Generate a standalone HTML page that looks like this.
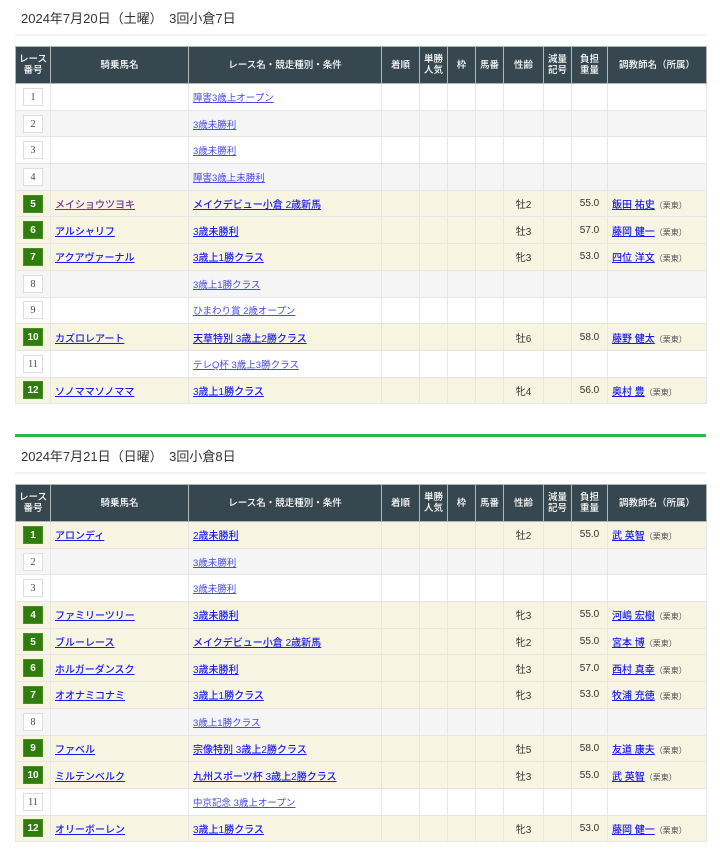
<!DOCTYPE html>
<html><head><meta charset="utf-8"><style>
body{margin:0;background:#fff;font-family:"Liberation Sans","Noto Sans CJK JP",sans-serif;color:#333;width:720px;}
.t{position:absolute;left:21px;font-size:13px;color:#333;}
.hl{position:absolute;left:15px;width:691px;height:2px;background:#f1f1f1;}
.g{position:absolute;left:15px;width:691px;height:3px;background:#2db64a;}
table{position:absolute;left:15px;width:691px;border-collapse:collapse;table-layout:fixed;font-size:10px;}
th{background:#37474f;color:#fff;font-weight:500;font-size:9.5px;line-height:11px;border:1px solid #aeb6ba;height:36px;padding:0;}
td{border:1px solid #e6e6e6;padding:0;height:25.7px;text-align:center;}
td.l{text-align:left;padding-left:4px;}
tr.a td{background:#f8f4e2;}
tr.w td{background:#fff;}
tr.s td{background:#f5f5f5;}
.n{display:inline-block;width:20px;height:18px;line-height:18px;font-size:10px;border:1px solid #ddd;background:#fff;color:#444;box-sizing:border-box;font-family:"Liberation Serif",serif;}
tr.a .n{background:#2f7d0b;border-color:#4c8c2a;color:#fff;font-weight:bold;font-family:"Liberation Sans",sans-serif;}
a{color:#1a1aee;text-decoration:underline;}
tr.a a{font-weight:500;font-size:10px;}
tr.w a,tr.s a{color:#4a4ae8;font-size:9.5px;}
.sf{font-size:8px;color:#555;}
</style></head><body>
<div class="t" style="top:8px">2024年7月20日（土曜）　3回小倉7日</div>
<div class="hl" style="top:34px"></div>
<table style="top:46px">
<colgroup><col style="width:35px"><col style="width:138px"><col style="width:193px"><col style="width:38px"><col style="width:28px"><col style="width:28px"><col style="width:28px"><col style="width:40px"><col style="width:28px"><col style="width:36px"><col style="width:99px"></colgroup>
<tr><th>レース<br>番号</th><th>騎乗馬名</th><th>レース名・競走種別・条件</th><th>着順</th><th>単勝<br>人気</th><th>枠</th><th>馬番</th><th>性齢</th><th>減量<br>記号</th><th>負担<br>重量</th><th>調教師名（所属）</th></tr>
<tr class="w"><td><span class="n">1</span></td><td></td><td class="l"><a>障害3歳上オープン</a></td><td></td><td></td><td></td><td></td><td></td><td></td><td></td><td></td></tr>
<tr class="s"><td><span class="n">2</span></td><td></td><td class="l"><a>3歳未勝利</a></td><td></td><td></td><td></td><td></td><td></td><td></td><td></td><td></td></tr>
<tr class="w"><td><span class="n">3</span></td><td></td><td class="l"><a>3歳未勝利</a></td><td></td><td></td><td></td><td></td><td></td><td></td><td></td><td></td></tr>
<tr class="s"><td><span class="n">4</span></td><td></td><td class="l"><a>障害3歳上未勝利</a></td><td></td><td></td><td></td><td></td><td></td><td></td><td></td><td></td></tr>
<tr class="a"><td><span class="n">5</span></td><td class="l"><a style="color:#6a3a9a">メイショウツヨキ</a></td><td class="l"><a>メイクデビュー小倉 2歳新馬</a></td><td></td><td></td><td></td><td></td><td>牡2</td><td></td><td>55.0</td><td class="l"><a>飯田 祐史</a><span class="sf">（栗東）</span></td></tr>
<tr class="a"><td><span class="n">6</span></td><td class="l"><a>アルシャリフ</a></td><td class="l"><a>3歳未勝利</a></td><td></td><td></td><td></td><td></td><td>牡3</td><td></td><td>57.0</td><td class="l"><a>藤岡 健一</a><span class="sf">（栗東）</span></td></tr>
<tr class="a"><td><span class="n">7</span></td><td class="l"><a>アクアヴァーナル</a></td><td class="l"><a>3歳上1勝クラス</a></td><td></td><td></td><td></td><td></td><td>牝3</td><td></td><td>53.0</td><td class="l"><a>四位 洋文</a><span class="sf">（栗東）</span></td></tr>
<tr class="s"><td><span class="n">8</span></td><td></td><td class="l"><a>3歳上1勝クラス</a></td><td></td><td></td><td></td><td></td><td></td><td></td><td></td><td></td></tr>
<tr class="w"><td><span class="n">9</span></td><td></td><td class="l"><a>ひまわり賞 2歳オープン</a></td><td></td><td></td><td></td><td></td><td></td><td></td><td></td><td></td></tr>
<tr class="a"><td><span class="n">10</span></td><td class="l"><a>カズロレアート</a></td><td class="l"><a>天草特別 3歳上2勝クラス</a></td><td></td><td></td><td></td><td></td><td>牡6</td><td></td><td>58.0</td><td class="l"><a>藤野 健太</a><span class="sf">（栗東）</span></td></tr>
<tr class="w"><td><span class="n">11</span></td><td></td><td class="l"><a>テレQ杯 3歳上3勝クラス</a></td><td></td><td></td><td></td><td></td><td></td><td></td><td></td><td></td></tr>
<tr class="a"><td><span class="n">12</span></td><td class="l"><a>ソノママソノママ</a></td><td class="l"><a>3歳上1勝クラス</a></td><td></td><td></td><td></td><td></td><td>牝4</td><td></td><td>56.0</td><td class="l"><a>奥村 豊</a><span class="sf">（栗東）</span></td></tr>
</table>
<div class="g" style="top:434px"></div>
<div class="t" style="top:446px">2024年7月21日（日曜）　3回小倉8日</div>
<div class="hl" style="top:472px"></div>
<table style="top:484px">
<colgroup><col style="width:35px"><col style="width:138px"><col style="width:193px"><col style="width:38px"><col style="width:28px"><col style="width:28px"><col style="width:28px"><col style="width:40px"><col style="width:28px"><col style="width:36px"><col style="width:99px"></colgroup>
<tr><th>レース<br>番号</th><th>騎乗馬名</th><th>レース名・競走種別・条件</th><th>着順</th><th>単勝<br>人気</th><th>枠</th><th>馬番</th><th>性齢</th><th>減量<br>記号</th><th>負担<br>重量</th><th>調教師名（所属）</th></tr>
<tr class="a"><td><span class="n">1</span></td><td class="l"><a>アロンディ</a></td><td class="l"><a>2歳未勝利</a></td><td></td><td></td><td></td><td></td><td>牡2</td><td></td><td>55.0</td><td class="l"><a>武 英智</a><span class="sf">（栗東）</span></td></tr>
<tr class="s"><td><span class="n">2</span></td><td></td><td class="l"><a>3歳未勝利</a></td><td></td><td></td><td></td><td></td><td></td><td></td><td></td><td></td></tr>
<tr class="w"><td><span class="n">3</span></td><td></td><td class="l"><a>3歳未勝利</a></td><td></td><td></td><td></td><td></td><td></td><td></td><td></td><td></td></tr>
<tr class="a"><td><span class="n">4</span></td><td class="l"><a>ファミリーツリー</a></td><td class="l"><a>3歳未勝利</a></td><td></td><td></td><td></td><td></td><td>牝3</td><td></td><td>55.0</td><td class="l"><a>河嶋 宏樹</a><span class="sf">（栗東）</span></td></tr>
<tr class="a"><td><span class="n">5</span></td><td class="l"><a>ブルーレース</a></td><td class="l"><a>メイクデビュー小倉 2歳新馬</a></td><td></td><td></td><td></td><td></td><td>牝2</td><td></td><td>55.0</td><td class="l"><a>宮本 博</a><span class="sf">（栗東）</span></td></tr>
<tr class="a"><td><span class="n">6</span></td><td class="l"><a>ホルガーダンスク</a></td><td class="l"><a>3歳未勝利</a></td><td></td><td></td><td></td><td></td><td>牡3</td><td></td><td>57.0</td><td class="l"><a>西村 真幸</a><span class="sf">（栗東）</span></td></tr>
<tr class="a"><td><span class="n">7</span></td><td class="l"><a>オオナミコナミ</a></td><td class="l"><a>3歳上1勝クラス</a></td><td></td><td></td><td></td><td></td><td>牝3</td><td></td><td>53.0</td><td class="l"><a>牧浦 充徳</a><span class="sf">（栗東）</span></td></tr>
<tr class="s"><td><span class="n">8</span></td><td></td><td class="l"><a>3歳上1勝クラス</a></td><td></td><td></td><td></td><td></td><td></td><td></td><td></td><td></td></tr>
<tr class="a"><td><span class="n">9</span></td><td class="l"><a>ファベル</a></td><td class="l"><a>宗像特別 3歳上2勝クラス</a></td><td></td><td></td><td></td><td></td><td>牡5</td><td></td><td>58.0</td><td class="l"><a>友道 康夫</a><span class="sf">（栗東）</span></td></tr>
<tr class="a"><td><span class="n">10</span></td><td class="l"><a>ミルテンベルク</a></td><td class="l"><a>九州スポーツ杯 3歳上2勝クラス</a></td><td></td><td></td><td></td><td></td><td>牡3</td><td></td><td>55.0</td><td class="l"><a>武 英智</a><span class="sf">（栗東）</span></td></tr>
<tr class="w"><td><span class="n">11</span></td><td></td><td class="l"><a>中京記念 3歳上オープン</a></td><td></td><td></td><td></td><td></td><td></td><td></td><td></td><td></td></tr>
<tr class="a"><td><span class="n">12</span></td><td class="l"><a>オリーボーレン</a></td><td class="l"><a>3歳上1勝クラス</a></td><td></td><td></td><td></td><td></td><td>牝3</td><td></td><td>53.0</td><td class="l"><a>藤岡 健一</a><span class="sf">（栗東）</span></td></tr>
</table>
</body></html>
